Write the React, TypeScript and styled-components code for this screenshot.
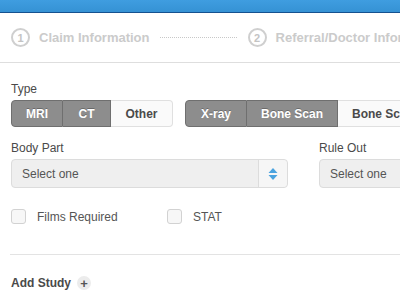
import styled, { createGlobalStyle } from "styled-components";

const GlobalStyle = createGlobalStyle`
    body {
        margin: 0;
        font-family: "Liberation Sans", Arial, sans-serif;
        background: #fff;
    }
`

export default function App() {
    return (
        <Page>
            <GlobalStyle />
            <TopBar />
            <Steps>
                <Step>
                    <StepNumber>1</StepNumber>
                    <StepName>Claim Information</StepName>
                </Step>
                <StepDots />
                <Step>
                    <StepNumber>2</StepNumber>
                    <StepName>Referral/Doctor Information</StepName>
                </Step>
            </Steps>
            <Form>
                <Label>Type</Label>
                <ButtonRow>
                    <Group>
                        <TypeButton $active $width={52}>MRI</TypeButton>
                        <TypeButton $active $width={48}>CT</TypeButton>
                        <TypeButton $width={62}>Other</TypeButton>
                    </Group>
                    <Group>
                        <TypeButton $active $width={62}>X-ray</TypeButton>
                        <TypeButton $active $width={91}>Bone Scan</TypeButton>
                        <TypeButton $width={91}>Bone Scan</TypeButton>
                    </Group>
                </ButtonRow>
                <FieldRow>
                    <Field $width={277}>
                        <Label>Body Part</Label>
                        <Select>
                            <SelectText>Select one</SelectText>
                            <SelectArrow>
                                <svg width="10" height="14" viewBox="0 0 10 14">
                                    <path d="M5 1 L9.5 6 L0.5 6 Z" fill="#4aa3df" />
                                    <path d="M5 13 L9.5 8 L0.5 8 Z" fill="#4aa3df" />
                                </svg>
                            </SelectArrow>
                        </Select>
                    </Field>
                    <Field $width={277}>
                        <Label>Rule Out</Label>
                        <Select>
                            <SelectText>Select one</SelectText>
                        </Select>
                    </Field>
                </FieldRow>
                <CheckRow>
                    <Check $width={156}>
                        <Box />
                        <CheckLabel>Films Required</CheckLabel>
                    </Check>
                    <Check $width={100}>
                        <Box />
                        <CheckLabel>STAT</CheckLabel>
                    </Check>
                </CheckRow>
            </Form>
            <Divider />
            <AddStudy>
                Add Study
                <Plus>+</Plus>
            </AddStudy>
        </Page>
    )
}

const Page = styled.div`
    width: 400px;
    height: 300px;
    overflow: hidden;
    background: #fff;
`

const TopBar = styled.div`
    height: 12px;
    background: linear-gradient(#3f9de0, #3592d4);
    border-bottom: 1px solid #16518f;
`

const Steps = styled.div`
    height: 49px;
    display: flex;
    align-items: center;
    padding-left: 11px;
    border-bottom: 1px solid #dedede;
    white-space: nowrap;
`

const Step = styled.div`
    display: flex;
    align-items: center;
    gap: 9px;
    flex-shrink: 0;
`

const StepNumber = styled.div`
    width: 15px;
    height: 15px;
    border: 2px solid #cfcfcf;
    border-radius: 50%;
    display: flex;
    align-items: center;
    justify-content: center;
    font-size: 11px;
    font-weight: bold;
    color: #c4c4c4;
`

const StepName = styled.div`
    font-size: 13px;
    font-weight: bold;
    color: #cbcbcb;
`

const StepDots = styled.div`
    width: 77px;
    margin: 0 11px 0 10px;
    border-top: 1px dotted #c8c8c8;
    flex-shrink: 0;
`

const Form = styled.div`
    padding: 19px 0 0 11px;
`

const Label = styled.div`
    font-size: 12px;
    color: #4a4a4a;
    line-height: 14px;
    margin-bottom: 4px;
`

const ButtonRow = styled.div`
    display: flex;
    gap: 12px;
`

const Group = styled.div`
    display: flex;
    flex-shrink: 0;
`

const TypeButton = styled.div<{ $active?: boolean, $width: number }>`
    width: ${p => p.$width}px;
    height: 27px;
    box-sizing: border-box;
    display: flex;
    align-items: center;
    justify-content: center;
    font-size: 12px;
    font-weight: bold;
    background: ${p => p.$active ? "#8d8d8d" : "#fafafa"};
    color: ${p => p.$active ? "#fff" : "#4a4a4a"};
    text-shadow: ${p => p.$active ? "0 -1px 0 rgba(0,0,0,0.25)" : "none"};
    border: 1px solid ${p => p.$active ? "#6f6f6f" : "#e0e0e0"};
    border-left: none;
    flex-shrink: 0;
    &:first-child {
        border-left: 1px solid #6f6f6f;
        border-radius: 4px 0 0 4px;
    }
    &:last-child {
        border-radius: 0 4px 4px 0;
    }
`

const FieldRow = styled.div`
    display: flex;
    gap: 31px;
    margin-top: 14px;
`

const Field = styled.div<{ $width: number }>`
    width: ${p => p.$width}px;
    flex-shrink: 0;
`

const Select = styled.div`
    height: 29px;
    box-sizing: border-box;
    border: 1px solid #dcdcdc;
    border-radius: 4px;
    background: #efefef;
    display: flex;
    align-items: center;
`

const SelectText = styled.div`
    flex: 1;
    padding-left: 10px;
    font-size: 12px;
    color: #555;
`

const SelectArrow = styled.div`
    width: 28px;
    height: 100%;
    border-left: 1px solid #dcdcdc;
    background: #f6f6f6;
    border-radius: 0 4px 4px 0;
    display: flex;
    align-items: center;
    justify-content: center;
`

const CheckRow = styled.div`
    display: flex;
    margin-top: 21px;
`

const Check = styled.div<{ $width: number }>`
    width: ${p => p.$width}px;
    display: flex;
    align-items: center;
    gap: 11px;
`

const Box = styled.div`
    width: 15px;
    height: 15px;
    box-sizing: border-box;
    border: 1px solid #d2d2d2;
    border-radius: 3px;
    background: #f7f7f7;
`

const CheckLabel = styled.div`
    font-size: 12px;
    color: #555;
`

const Divider = styled.div`
    margin: 30px 0 0 10px;
    border-top: 1px solid #e3e3e3;
`

const AddStudy = styled.div`
    display: flex;
    align-items: center;
    gap: 6px;
    padding: 21px 0 0 11px;
    font-size: 12px;
    font-weight: bold;
    color: #4a4a4a;
`

const Plus = styled.div`
    width: 14px;
    height: 14px;
    border-radius: 50%;
    background: #ececec;
    display: flex;
    align-items: center;
    justify-content: center;
    font-size: 13px;
    color: #555;
    line-height: 1;
`
